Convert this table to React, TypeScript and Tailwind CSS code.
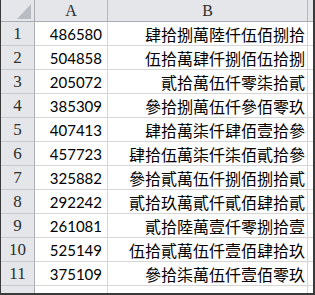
const rows: [string, string][] = [
  ['486580', '肆拾捌萬陸仟伍佰捌拾'],
  ['504858', '伍拾萬肆仟捌佰伍拾捌'],
  ['205072', '貳拾萬伍仟零柒拾貳'],
  ['385309', '參拾捌萬伍仟參佰零玖'],
  ['407413', '肆拾萬柒仟肆佰壹拾參'],
  ['457723', '肆拾伍萬柒仟柒佰貳拾參'],
  ['325882', '參拾貳萬伍仟捌佰捌拾貳'],
  ['292242', '貳拾玖萬貳仟貳佰肆拾貳'],
  ['261081', '貳拾陸萬壹仟零捌拾壹'],
  ['525149', '伍拾貳萬伍仟壹佰肆拾玖'],
  ['375109', '參拾柒萬伍仟壹佰零玖'],
];

const hdrFont = { fontFamily: '"Liberation Serif", "Noto Sans CJK TC", serif' };

export default function App() {
  return (
    <div className="w-[315px] h-[295px] overflow-hidden bg-white">
      <div className="flex flex-col h-[295px] border-l border-r-2 border-b-2 border-[#3a3a3a]">
        {/* column header */}
        <div className="flex h-[22px] shrink-0 bg-[#e4e6ea] border-b border-[#a9adb2]">
          <div className="w-[34px] shrink-0 border-r border-[#a9adb2] flex items-end justify-end pr-[3px] pb-[2px]">
            <svg width="14" height="15" viewBox="0 0 14 15">
              <polygon points="14,0 14,15 0,15" fill="#b9bdc3" />
            </svg>
          </div>
          <div
            className="w-[73px] shrink-0 border-r border-[#b4b8bd] flex items-center justify-center text-[16px] text-[#2e2e2e]"
            style={hdrFont}
          >
            A
          </div>
          <div
            className="w-[200px] shrink-0 border-r border-[#b4b8bd] flex items-center justify-center text-[16px] text-[#2e2e2e]"
            style={hdrFont}
          >
            B
          </div>
          <div className="flex-1" />
        </div>
        {rows.map(([num, text], i) => (
          <div key={i} className="flex h-[24px] shrink-0">
            <div
              className="w-[34px] shrink-0 bg-[#e4e6ea] border-r border-b border-r-[#a9adb2] border-b-[#c6cace] flex items-center justify-center text-[17px] text-[#2e2e2e]"
              style={hdrFont}
            >
              {i + 1}
            </div>
            <div
              className="w-[73px] shrink-0 border-r border-b border-[#d6d6d6] flex items-center justify-end pr-[5px] pt-[1px] text-[15px] text-black"
              style={{ fontFamily: 'Lato, "Liberation Sans", sans-serif' }}
            >
              {num}
            </div>
            <div
              className="w-[200px] shrink-0 border-r border-b border-[#d6d6d6] flex items-center justify-end pr-[2px] text-[16px] text-black whitespace-nowrap"
              style={{ fontFamily: '"Noto Sans CJK TC", sans-serif' }}
            >
              {text}
            </div>
            <div className="flex-1 border-b border-[#d6d6d6]" />
          </div>
        ))}
        <div className="flex flex-1">
          <div className="w-[34px] shrink-0 bg-[#e4e6ea] border-r border-[#a9adb2]" />
          <div className="w-[73px] shrink-0 border-r border-[#d6d6d6]" />
          <div className="w-[200px] shrink-0 border-r border-[#d6d6d6]" />
          <div className="flex-1" />
        </div>
      </div>
    </div>
  );
}
